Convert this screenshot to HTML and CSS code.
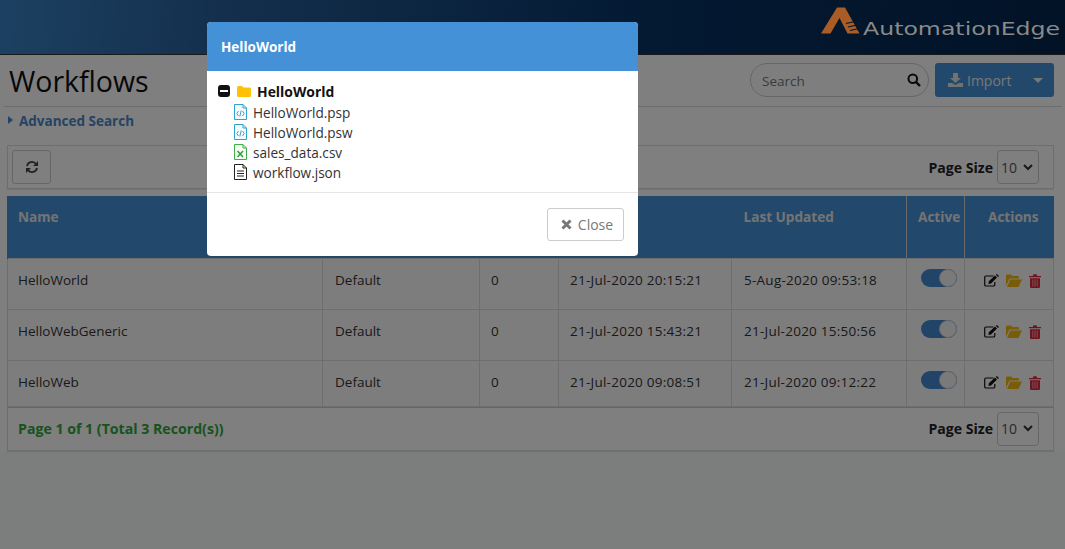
FILE: index.html
```html
<!DOCTYPE html>
<html lang="en">
<head>
<meta charset="utf-8">
<title>Workflows</title>
<link rel="stylesheet" href="styles.css">
</head>
<body>
<header class="topbar">
  <div class="logo">
    <svg class="logo-mark" width="40" height="27" viewBox="0 0 40 27"><path d="M0 26.500 L16 0.500 H24 L38.500 26.500 H26.500 L18.500 11 L9.500 26.500 Z" fill="#a95c26"/><path d="M25 16.500 L34 14.500 M27 20 L36 18 M29 23.500 L38 21.500" stroke="#03162c" stroke-width="1.200"/></svg>
    <span class="logo-text">AutomationEdge</span>
  </div>
</header>
<main class="page">
  <div class="title-row">
    <h1>Workflows</h1>
    <div class="title-tools">
      <div class="search">
        <span class="search-label">Search</span>
        <svg width="14" height="14" viewBox="0 0 14 14"><circle cx="5.800" cy="5.800" r="4.300" fill="none" stroke="#111" stroke-width="2"/><path d="M9 9 L13 13" stroke="#111" stroke-width="2.400"/></svg>
      </div>
      <div class="import">
        <svg width="15" height="14" viewBox="0 0 15 14"><path d="M5 0 H10 V5 H13 L7.500 10 L2 5 H5 Z M0 10 H4 L7.500 12 L11 10 H15 V14 H0 Z" fill="#e4e4e4"/></svg>
        <span class="import-label">Import</span>
        <span class="caret"></span>
      </div>
    </div>
  </div>
  <div class="advanced"><span class="tri"></span>Advanced Search</div>
  <div class="toolbar">
    <div class="refresh">
      <svg width="14" height="14" viewBox="0 0 14 14" fill="none" stroke="#444" stroke-width="1.800"><path d="M2 6 A5 5 0 0 1 11 4"/><path d="M12 8 A5 5 0 0 1 3 10"/><path d="M13 1 V6 H8 Z M1 13 V8 H6 Z" fill="#444" stroke="none"/></svg>
    </div>
    <div class="page-size"><b>Page Size</b><span class="select">10<svg width="10" height="7" viewBox="0 0 10 7"><path d="M1 1 L5 5 L9 1" fill="none" stroke="#333" stroke-width="2"/></svg></span></div>
  </div>
  <table class="grid">
    <colgroup><col class="c1"><col class="c2"><col class="c3"><col class="c4"><col class="c5"><col class="c6"><col class="c7"></colgroup>
    <thead>
      <tr><th>Name</th><th></th><th></th><th></th><th>Last Updated</th><th>Active</th><th>Actions</th></tr>
    </thead>
    <tbody>
      <tr><td>HelloWorld</td><td>Default</td><td>0</td><td class="date">21-Jul-2020 20:15:21</td><td class="date">5-Aug-2020 09:53:18</td><td><span class="toggle"><i></i></span></td><td class="acts"><svg width="15" height="13" viewBox="0 0 15 13"><path d="M9.500 2 H2 Q.7 2 .7 3.300 V10.700 Q.7 12 2 12 H9.500 Q10.800 12 10.800 10.700 V8" fill="none" stroke="#111" stroke-width="1.200"/><path d="M4.800 7.200 L11 1.500 L13 3.500 L7 9.500 L4.500 10 Z M11.800 .8 L12.800 0 L15 2 L14 3 Z" fill="#111"/></svg><svg class="folder" width="16" height="13" viewBox="0 0 16 13"><path d="M0 12 V1.500 Q0 .5 1 .5 H5 L6.500 2 H12 Q13 2 13 3 V4.500 H3.500 Z M1 13 L4.200 5.500 H16 L12.500 13 Z" fill="#f0b90f"/></svg><svg width="12" height="14" viewBox="0 0 12 14"><path d="M0 2 H3.800 L4.500 .3 H7.500 L8.200 2 H12 V3.300 H0 Z M1 4.300 H11 V12.700 Q11 14 9.800 14 H2.200 Q1 14 1 12.700 Z" fill="#e02a3c"/><path d="M3.800 5.500 V12.500 M6 5.500 V12.500 M8.200 5.500 V12.500" stroke="#f0a0a8" stroke-width="1"/></svg></td></tr>
      <tr><td>HelloWebGeneric</td><td>Default</td><td>0</td><td class="date">21-Jul-2020 15:43:21</td><td class="date">21-Jul-2020 15:50:56</td><td><span class="toggle"><i></i></span></td><td class="acts"><svg width="15" height="13" viewBox="0 0 15 13"><path d="M9.500 2 H2 Q.7 2 .7 3.300 V10.700 Q.7 12 2 12 H9.500 Q10.800 12 10.800 10.700 V8" fill="none" stroke="#111" stroke-width="1.200"/><path d="M4.800 7.200 L11 1.500 L13 3.500 L7 9.500 L4.500 10 Z M11.800 .8 L12.800 0 L15 2 L14 3 Z" fill="#111"/></svg><svg class="folder" width="16" height="13" viewBox="0 0 16 13"><path d="M0 12 V1.500 Q0 .5 1 .5 H5 L6.500 2 H12 Q13 2 13 3 V4.500 H3.500 Z M1 13 L4.200 5.500 H16 L12.500 13 Z" fill="#f0b90f"/></svg><svg width="12" height="14" viewBox="0 0 12 14"><path d="M0 2 H3.800 L4.500 .3 H7.500 L8.200 2 H12 V3.300 H0 Z M1 4.300 H11 V12.700 Q11 14 9.800 14 H2.200 Q1 14 1 12.700 Z" fill="#e02a3c"/><path d="M3.800 5.500 V12.500 M6 5.500 V12.500 M8.200 5.500 V12.500" stroke="#f0a0a8" stroke-width="1"/></svg></td></tr>
      <tr class="last"><td>HelloWeb</td><td>Default</td><td>0</td><td class="date">21-Jul-2020 09:08:51</td><td class="date">21-Jul-2020 09:12:22</td><td><span class="toggle"><i></i></span></td><td class="acts"><svg width="15" height="13" viewBox="0 0 15 13"><path d="M9.500 2 H2 Q.7 2 .7 3.300 V10.700 Q.7 12 2 12 H9.500 Q10.800 12 10.800 10.700 V8" fill="none" stroke="#111" stroke-width="1.200"/><path d="M4.800 7.200 L11 1.500 L13 3.500 L7 9.500 L4.500 10 Z M11.800 .8 L12.800 0 L15 2 L14 3 Z" fill="#111"/></svg><svg class="folder" width="16" height="13" viewBox="0 0 16 13"><path d="M0 12 V1.500 Q0 .5 1 .5 H5 L6.500 2 H12 Q13 2 13 3 V4.500 H3.500 Z M1 13 L4.200 5.500 H16 L12.500 13 Z" fill="#f0b90f"/></svg><svg width="12" height="14" viewBox="0 0 12 14"><path d="M0 2 H3.800 L4.500 .3 H7.500 L8.200 2 H12 V3.300 H0 Z M1 4.300 H11 V12.700 Q11 14 9.800 14 H2.200 Q1 14 1 12.700 Z" fill="#e02a3c"/><path d="M3.800 5.500 V12.500 M6 5.500 V12.500 M8.200 5.500 V12.500" stroke="#f0a0a8" stroke-width="1"/></svg></td></tr>
    </tbody>
  </table>
  <div class="footer-bar">
    <span class="records">Page 1 of 1 (Total 3 Record(s))</span>
    <div class="page-size"><b>Page Size</b><span class="select">10<svg width="10" height="7" viewBox="0 0 10 7"><path d="M1 1 L5 5 L9 1" fill="none" stroke="#333" stroke-width="2"/></svg></span></div>
  </div>
</main>
<div class="backdrop"></div>
<section class="modal">
  <div class="modal-head">HelloWorld</div>
  <div class="modal-body">
    <div class="tree-root">
      <span class="minus"><i></i></span>
      <svg class="root-folder" width="14" height="11" viewBox="0 0 14 11"><path d="M0 1.500 Q0 0 1.500 0 H5 L6.500 1.500 H12.500 Q14 1.500 14 3 V9.500 Q14 11 12.500 11 H1.500 Q0 11 0 9.500 Z" fill="#ffc107"/></svg>
      <b>HelloWorld</b>
    </div>
    <ul class="tree">
      <li><svg width="13" height="16" viewBox="0 0 13 16"><path d="M.5 .5 H9 L12.500 4 V15.500 H.5 Z" fill="#f4fbff" stroke="#2fa3cf"/><path d="M9 .5 V4 H12.500" fill="none" stroke="#2fa3cf"/><path d="M4.500 7 L2.800 9.500 L4.500 12 M8.500 7 L10.200 9.500 L8.500 12 M7.200 6.500 L5.800 12.500" fill="none" stroke="#3b8fc9" stroke-width=".9"/></svg>HelloWorld.psp</li>
      <li><svg width="13" height="16" viewBox="0 0 13 16"><path d="M.5 .5 H9 L12.500 4 V15.500 H.5 Z" fill="#f4fbff" stroke="#2fa3cf"/><path d="M9 .5 V4 H12.500" fill="none" stroke="#2fa3cf"/><path d="M4.500 7 L2.800 9.500 L4.500 12 M8.500 7 L10.200 9.500 L8.500 12 M7.200 6.500 L5.800 12.500" fill="none" stroke="#3b8fc9" stroke-width=".9"/></svg>HelloWorld.psw</li>
      <li><svg width="13" height="16" viewBox="0 0 13 16"><path d="M.5 .5 H9 L12.500 4 V15.500 H.5 Z" fill="#f6fff4" stroke="#3fae49"/><path d="M9 .5 V4 H12.500" fill="none" stroke="#3fae49"/><path d="M3.500 7 L9 13 M9 7 L3.500 13" stroke="#2e9b3e" stroke-width="1.500"/></svg>sales_data.csv</li>
      <li><svg width="13" height="16" viewBox="0 0 13 16"><path d="M.5 .5 H9 L12.500 4 V15.500 H.5 Z" fill="#fff" stroke="#222"/><path d="M9 .5 V4 H12.500 M3 7 H10 M3 9.500 H10 M3 12 H10" fill="none" stroke="#222"/></svg>workflow.json</li>
    </ul>
  </div>
  <div class="modal-foot">
    <div class="close-btn"><svg width="11" height="11" viewBox="0 0 11 11"><path d="M1.500 1.500 L9.500 9.500 M9.500 1.500 L1.500 9.500" stroke="#777" stroke-width="3"/></svg>Close</div>
  </div>
</section>
</body>
</html>
```
FILE: styles.css
```css
* { box-sizing: border-box; }
html, body { margin: 0; height: 100%; }
body {
  width: 1065px;
  height: 549px;
  overflow: hidden;
  position: relative;
  background: #f8fcfa;
  font-family: "Open Sans", "Noto Sans", sans-serif;
  font-size: 13px;
  color: #333;
}
.topbar {
  height: 55px;
  background: linear-gradient(95deg, #3a82c4 0%, #28609c 20%, #083466 60%, #062c58 80%, #04264f 100%);
  display: flex;
  justify-content: flex-end;
  align-items: flex-start;
  padding: 7px 0 0 0;
  border-bottom: 1px solid #333;
  box-shadow: 0 1px 2px rgba(0, 0, 0, .25);
}
.logo { display: flex; align-items: flex-start; position: relative; z-index: 2; width: 244px; }
.logo-mark { flex: none; }
.logo-text {
  display: block;
  color: #8a8a8a;
  font-family: "DejaVu Sans", sans-serif;
  font-size: 17px;
  line-height: 20px;
  margin-top: 12px;
  margin-left: 2px;
  transform: scaleX(1.390);
  transform-origin: left center;
  white-space: nowrap;
}
.page { padding: 0 11px 0 7px; background: #fff; height: 396px; }
.title-row {
  height: 52px;
  margin-left: -3px;
  margin-right: -8px;
  padding: 0 8px 0 5px;
  display: flex;
  justify-content: space-between;
  align-items: center;
  border-bottom: 1px solid #d8d8d8;
}
h1 { margin: 0; font-size: 28.500px; font-weight: 400; color: #111; line-height: 52px; }
.title-tools { display: flex; gap: 6px; align-items: center; margin-top: -1px; }
.search {
  width: 179px;
  height: 34px;
  border: 1px solid #ccc;
  border-radius: 17px;
  padding: 0 7px 0 11px;
  display: flex;
  justify-content: space-between;
  align-items: center;
  color: #777;
  font-size: 13.500px;
  background: #fcfcfc;
}
.search-label { padding-top: 2px; }
.import {
  width: 119px;
  height: 34px;
  border-radius: 3px;
  background: #4591d8;
  color: #eee;
  display: flex;
  align-items: center;
  padding: 0 11px 0 13px;
  font-size: 14px;
}
.import-label { margin-left: 4px; flex: 1; }
.caret {
  width: 0; height: 0;
  border-left: 5px solid transparent;
  border-right: 5px solid transparent;
  border-top: 5px solid #eee;
}
.advanced {
  height: 38px;
  padding: 5px 0 0 1px;
  color: #4a86c8;
  font-weight: 700;
  font-size: 13.500px;
  line-height: 18px;
  display: flex;
  align-items: flex-start;
}
.tri {
  width: 0; height: 0;
  margin: 4px 6px 0 0;
  border-top: 4px solid transparent;
  border-bottom: 4px solid transparent;
  border-left: 5px solid #4a86c8;
}
.toolbar {
  height: 44px;
  border: 1px solid #ddd;
  padding: 0 14px 0 4px;
  display: flex;
  justify-content: space-between;
  align-items: center;
  margin-bottom: 7px;
  box-shadow: 0 1px 1px rgba(0, 0, 0, .08);
}
.refresh {
  width: 39px;
  height: 34px;
  border: 1px solid #ccc;
  border-radius: 3px;
  display: flex;
  align-items: center;
  justify-content: center;
}
.page-size { display: flex; align-items: center; gap: 4px; color: #222; }
.page-size b { font-size: 14.100px; }
.select {
  width: 42px;
  height: 34px;
  border: 1px solid #ccc;
  border-radius: 4px;
  padding: 0 5px 0 3px;
  display: flex;
  align-items: center;
  justify-content: space-between;
  color: #555;
  font-size: 14px;
}
.grid {
  width: 1046px;
  table-layout: fixed;
  border-collapse: collapse;
}
.c1 { width: 315px; }
.c2 { width: 157px; }
.c3 { width: 79px; }
.c4 { width: 173px; }
.c5 { width: 175px; }
.c6 { width: 58px; }
.c7 { width: 89px; }
.grid th {
  height: 62px;
  background: #4591d8;
  color: #e8e8e8;
  font-size: 13.600px;
  font-weight: 700;
  text-align: left;
  vertical-align: top;
  padding: 11px 11px 0;
  border-left: 1px solid #d5d5d5;
}
.grid th:nth-child(2), .grid th:nth-child(3), .grid th:nth-child(4), .grid th:nth-child(5) { border-left: 0; }
.grid th:first-child { padding-left: 10px; border-left-color: #4591d8; }
.grid th:nth-child(5) { padding-left: 12px; }
.grid th:nth-child(6) { padding: 11px 0 0 11px; }
.grid th:nth-child(7) { padding-left: 23px; }
.grid td {
  height: 51px;
  padding: 12px 11px 0;
  vertical-align: top;
  border: 1px solid #ddd;
  font-size: 13.500px;
  line-height: 18px;
  color: #333;
  background: #fbfbfb;
}
.grid td:first-child { padding-left: 10px; }
.grid td:nth-child(2), .grid td:nth-child(5) { padding-left: 12px; }
.grid td.date { letter-spacing: .25px; }
.grid .last td { height: 46px; }
.toggle {
  display: block;
  width: 36px;
  height: 18px;
  margin: -2px 0 0 3px;
  border-radius: 9px;
  background: #4488d0;
  position: relative;
}
.toggle i {
  position: absolute;
  right: 0;
  top: 0;
  width: 18px;
  height: 18px;
  border-radius: 50%;
  background: #f4f4f4;
  border: 1px solid #cfcfcf;
}
.acts { white-space: nowrap; }
.grid td.acts { padding: 15px 0 0 19px; }
.acts svg { margin-right: 7px; vertical-align: top; }
.footer-bar {
  height: 44px;
  border: 1px solid #ddd;
  border-top-color: #ccc;
  padding: 0 14px 0 10px;
  display: flex;
  justify-content: space-between;
  align-items: center;
  box-shadow: 0 1px 1px rgba(0, 0, 0, .1);
}
.records { color: #2fa63a; font-weight: 700; font-size: 14.150px; }
.backdrop {
  position: absolute;
  inset: 0;
  background: rgba(0, 0, 0, .5);
}
.modal {
  position: absolute;
  left: 207px;
  top: 22px;
  width: 431px;
  height: 234px;
  background: #fff;
  border-radius: 4px;
  overflow: hidden;
  display: flex;
  flex-direction: column;
}
.modal-head {
  height: 49px;
  background: #4591d8;
  color: #fff;
  font-size: 13.500px;
  font-weight: 700;
  display: flex;
  align-items: center;
  padding: 0 14px;
}
.modal-body { height: 122px; padding: 11px 11px 0; border-bottom: 1px solid #e5e5e5; color: #333; }
.tree-root { display: flex; align-items: center; height: 18px; color: #111; }
.tree-root b { font-size: 13.900px; }
.minus {
  width: 12px; height: 12px;
  background: #111;
  border-radius: 3px;
  display: flex; align-items: center; justify-content: center;
  margin-right: 7px;
}
.minus i { width: 8px; height: 2px; background: #fff; display: block; }
.root-folder { margin-right: 6px; }
.tree { list-style: none; margin: 2px 0 0; padding: 0 0 0 16px; }
.tree li { height: 20px; display: flex; align-items: center; gap: 6px; font-size: 13.600px; }
.modal-foot { flex: 1; display: flex; justify-content: flex-end; padding: 15px 14px 0 0; }
.close-btn {
  width: 77px; height: 33px;
  border: 1px solid #ccc;
  border-radius: 3px;
  display: flex; align-items: center; justify-content: center;
  gap: 6px;
  padding-left: 3px;
  color: #777;
  font-size: 14px;
}
```
